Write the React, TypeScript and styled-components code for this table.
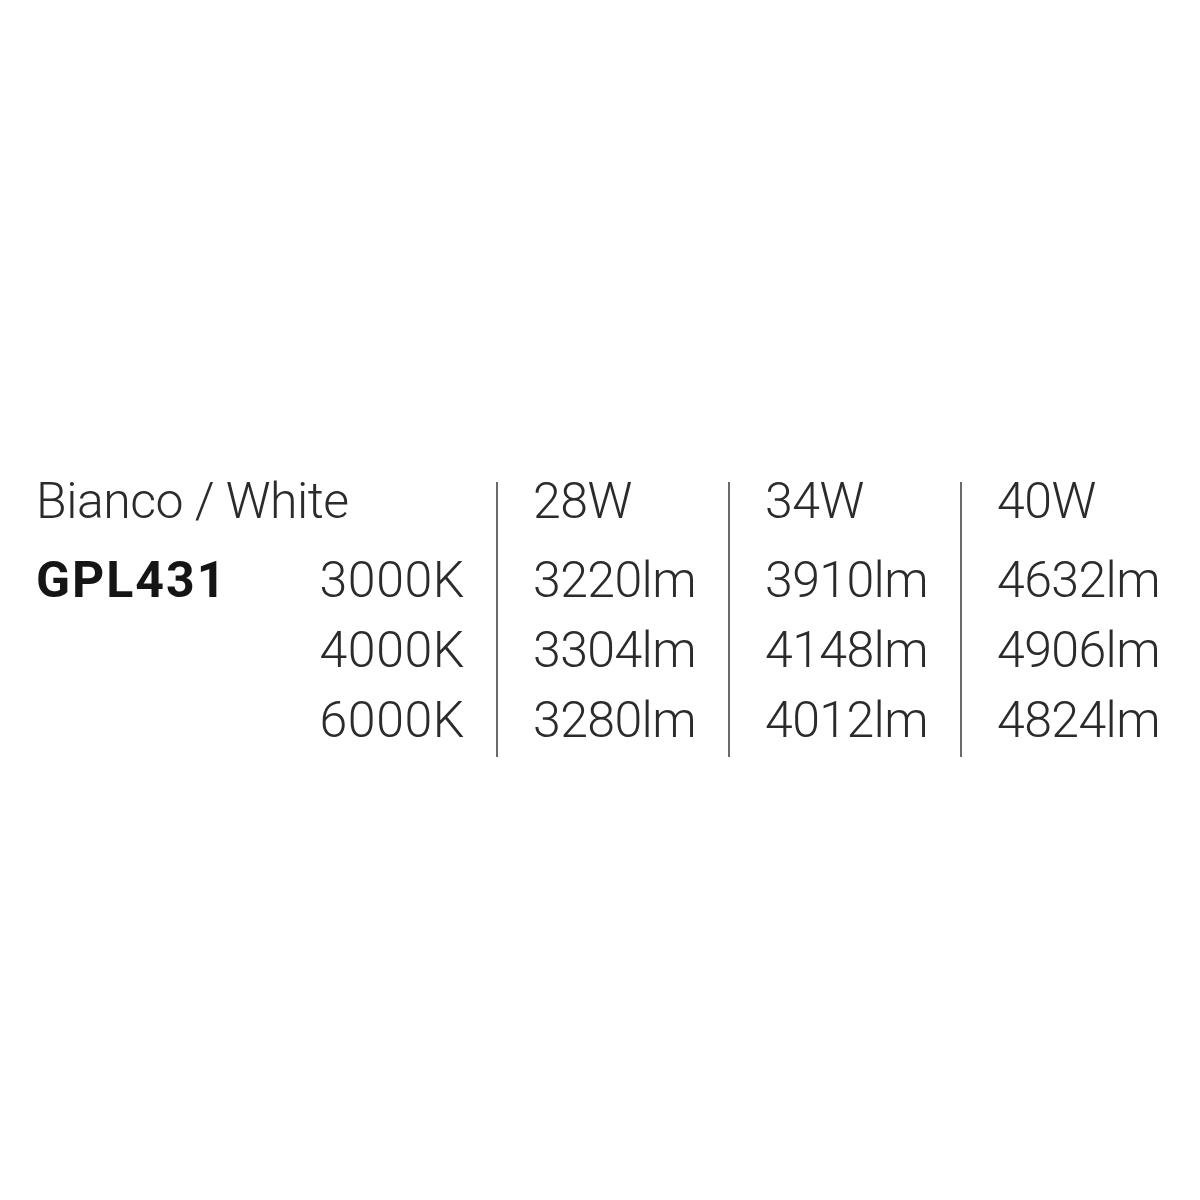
import React from "react";
import styled, { createGlobalStyle } from "styled-components";

const Global = createGlobalStyle`
  html, body { margin: 0; padding: 0; background: #ffffff; }
  body { font-family: Roboto, "Liberation Sans", Arial, sans-serif; }
`;

const Page = styled.div`
  width: 1200px;
  height: 1200px;
  box-sizing: border-box;
  padding: 482px 0 0 36px;
  background: #ffffff;
`;

const Table = styled.div`
  display: flex;
  align-items: stretch;
`;

const LabelBlock = styled.div`
  width: 460px;
  display: grid;
  grid-template-columns: auto 1fr;
  grid-auto-rows: 70px;
`;

const Header = styled.div`
  font-size: 50px;
  font-weight: 300;
  line-height: 38px;
  height: 38px;
  margin-bottom: 25px;
  color: #2b2b2b;
  letter-spacing: -0.5px;
  white-space: nowrap;
`;

const Cell = styled.div<{ $bold?: boolean; $right?: boolean }>`
  font-size: 50px;
  line-height: 70px;
  font-weight: ${(p) => (p.$bold ? 700 : 300)};
  color: ${(p) => (p.$bold ? "#151515" : "#2b2b2b")};
  text-align: ${(p) => (p.$right ? "right" : "left")};
  padding-right: ${(p) => (p.$right ? "31px" : "0")};
  letter-spacing: ${(p) => (p.$bold ? "2px" : p.$right ? "0.6px" : "-0.6px")};
  white-space: nowrap;
`;

const PowerCol = styled.div`
  width: 232px;
  box-sizing: border-box;
  border-left: 2px solid #6a6a6a;
  padding: 0 0 2px 35px;
  display: flex;
  flex-direction: column;
`;

const LeftGrid = styled.div`
  display: flex;
  flex-direction: column;
`;

const rows = [
  { code: "GPL431", k: "3000K" },
  { code: "", k: "4000K" },
  { code: "", k: "6000K" },
];

const powers = [
  { w: "28W", lm: ["3220lm", "3304lm", "3280lm"] },
  { w: "34W", lm: ["3910lm", "4148lm", "4012lm"] },
  { w: "40W", lm: ["4632lm", "4906lm", "4824lm"] },
];

export default function App() {
  return (
    <>
      <Global />
      <Page>
        <Table>
          <LeftGrid>
            <Header>Bianco / White</Header>
            <LabelBlock>
              {rows.map((r) => (
                <React.Fragment key={r.k}>
                  <Cell $bold>{r.code}</Cell>
                  <Cell $right>{r.k}</Cell>
                </React.Fragment>
              ))}
            </LabelBlock>
          </LeftGrid>
          {powers.map((p) => (
            <PowerCol key={p.w}>
              <Header>{p.w}</Header>
              {p.lm.map((v) => (
                <Cell key={v}>{v}</Cell>
              ))}
            </PowerCol>
          ))}
        </Table>
      </Page>
    </>
  );
}
